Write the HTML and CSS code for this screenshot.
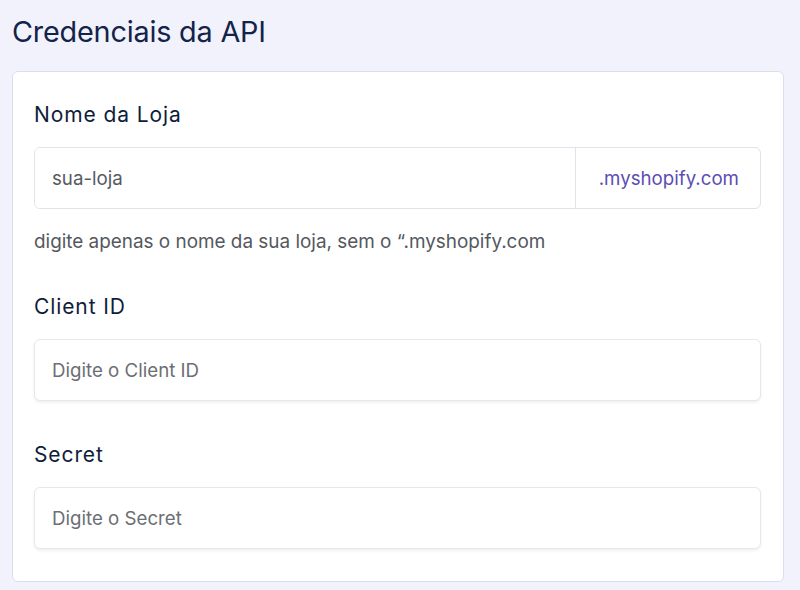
FILE: index.html
```html
<!DOCTYPE html>
<html lang="pt-BR">
<head>
<meta charset="utf-8">
<title>Credenciais da API</title>
<link rel="stylesheet" href="styles.css">
</head>
<body>
  <main class="page">
    <h1 class="title">Credenciais da API</h1>
    <section class="card">
      <div class="field">
        <label class="label" for="store">Nome da Loja</label>
        <div class="input-group">
          <input class="input input-joined" id="store" type="text" value="sua-loja">
          <span class="addon">.myshopify.com</span>
        </div>
        <p class="help">digite apenas o nome da sua loja, sem o “.myshopify.com</p>
      </div>
      <div class="field">
        <label class="label" for="client">Client ID</label>
        <input class="input input-shadow" id="client" type="text" placeholder="Digite o Client ID">
      </div>
      <div class="field">
        <label class="label" for="secret">Secret</label>
        <input class="input input-shadow" id="secret" type="text" placeholder="Digite o Secret">
      </div>
    </section>
  </main>
</body>
</html>
```
FILE: styles.css
```css
* {
  box-sizing: border-box;
}

html, body {
  margin: 0;
  padding: 0;
}

body {
  background: #f1f2fc;
  font-family: "Inter", "Liberation Sans", sans-serif;
  color: #0f1d3a;
}

.page {
  padding: 12px 16px 0 12px;
}

.title {
  margin: 0 0 19px 0;
  font-family: "Inter", sans-serif;
  font-weight: 400;
  font-size: 28.8px;
  line-height: 40px;
  color: #13234a;
  letter-spacing: -0.2px;
}

.card {
  background: #ffffff;
  border: 1px solid #dcdef0;
  border-radius: 6px;
  padding: 29px 22px 32px 21px;
  display: flex;
  flex-direction: column;
  gap: 40px;
}

.field {
  display: flex;
  flex-direction: column;
}

.label {
  font-family: "Inter", sans-serif;
  font-size: 21px;
  line-height: 28px;
  letter-spacing: 0.9px;
  color: #0f1d3a;
  margin-bottom: 18px;
}

.input-group {
  display: flex;
  border: 1px solid #e1e2ea;
  border-radius: 6px;
  height: 62px;
  overflow: hidden;
}

.input {
  font-family: "Inter", sans-serif;
  font-size: 18.7px;
  color: #555a61;
  height: 62px;
  padding: 0 17px;
  border: 1px solid #e6e7ec;
  border-radius: 6px;
  background: #fff;
  outline: none;
  width: 100%;
}

.input::placeholder {
  color: #6b6e74;
}

.input-joined {
  border: none;
  border-radius: 0;
  height: 60px;
  flex: 1;
  min-width: 0;
}

.addon {
  display: flex;
  align-items: center;
  padding: 0 21px 0 23px;
  border-left: 1px solid #e1e2ea;
  font-size: 18.7px;
  color: #5b4db4;
}

.input-shadow {
  box-shadow: 0 2px 3px rgba(20, 20, 60, 0.06);
}

.help {
  margin: 22px 0 0 0;
  font-size: 18.9px;
  line-height: 22px;
  color: #54585e;
}
```
